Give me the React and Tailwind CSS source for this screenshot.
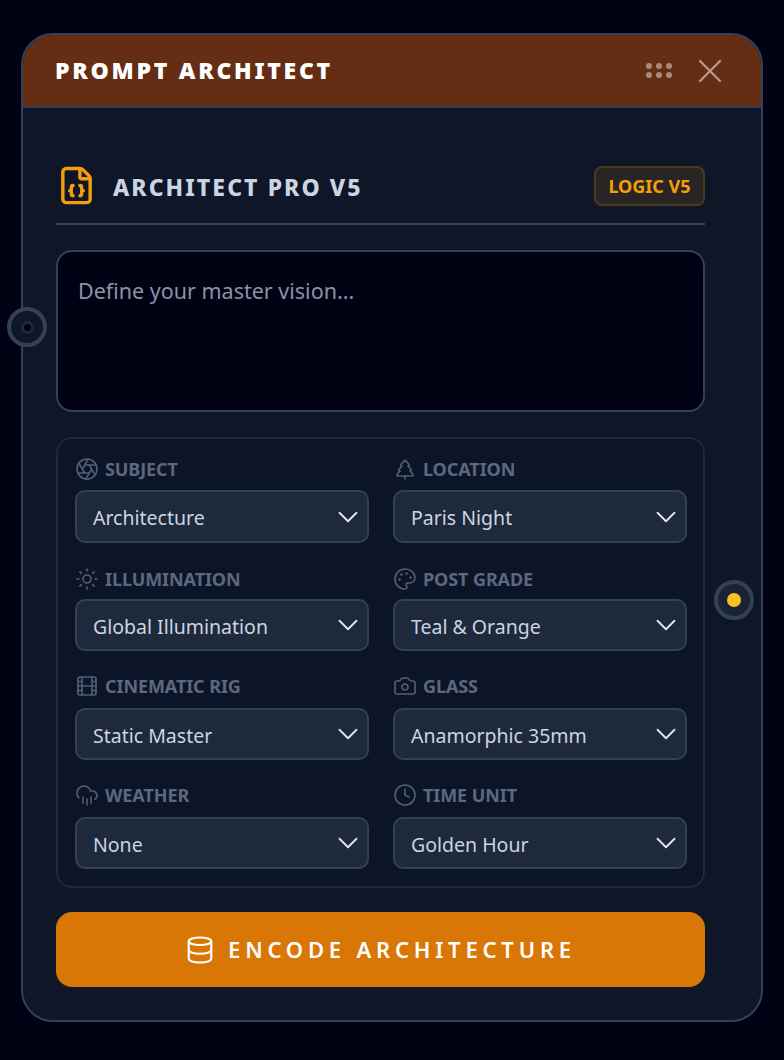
import {
  Aperture,
  Camera,
  ChevronDown,
  Clock,
  CloudRain,
  Database,
  FileJson,
  Film,
  Palette,
  Sun,
  TreePine,
  X,
} from 'lucide-react';

const fields = [
  [
    { label: 'SUBJECT', value: 'Architecture', icon: Aperture },
    { label: 'LOCATION', value: 'Paris Night', icon: TreePine },
  ],
  [
    { label: 'ILLUMINATION', value: 'Global Illumination', icon: Sun },
    { label: 'POST GRADE', value: 'Teal & Orange', icon: Palette },
  ],
  [
    { label: 'CINEMATIC RIG', value: 'Static Master', icon: Film },
    { label: 'GLASS', value: 'Anamorphic 35mm', icon: Camera },
  ],
  [
    { label: 'WEATHER', value: 'None', icon: CloudRain },
    { label: 'TIME UNIT', value: 'Golden Hour', icon: Clock },
  ],
];

const rowGaps = ['', 'mt-[24px]', 'mt-[23px]', 'mt-[23px]'];
const labelGaps = ['mb-[9px]', 'mb-[8px]', 'mb-[10px]', 'mb-[10px]'];

const Field = ({ label, value, icon: Icon, tall, labelGap }) => (
  <div className="flex flex-col">
    <div className={`flex h-[24px] items-center gap-[6px] ${labelGap}`}>
      <Icon size={24} strokeWidth={1.6} className="text-[#515f75]" />
      <span className="text-[18px] font-bold leading-none tracking-[-0.005em] text-[#5b6880]">{label}</span>
    </div>
    <div className="relative">
      <div
        className={`flex items-center rounded-[10px] border-2 border-[#334155] bg-[#1e293b] pl-[16px] text-[19.5px] text-[#cbd5e1] ${
          tall ? 'h-[53px] pt-[2px]' : 'h-[52px] pt-[4px]'
        }`}
      >
        {value}
      </div>
      <ChevronDown size={34} strokeWidth={1.3} className="absolute right-[4px] top-1/2 -translate-y-1/2 text-[#e2e8f0]" />
    </div>
  </div>
);

export default function App() {
  return (
    <div className="relative h-[1060px] w-[784px] overflow-hidden bg-[#000213] pt-[33px] pl-[21px] font-['Noto_Sans','Open_Sans',sans-serif]">
      <div className="relative h-[989px] w-[742px] rounded-[32px] border-2 border-[#334155] bg-[#0e1628]">
        <div className="flex h-[73px] items-center justify-between rounded-t-[30px] border-b-2 border-[#334155] bg-[#652e14] pl-[32px] pr-[31px]">
          <h1 className="text-[23px] font-black leading-none tracking-[0.118em] text-white">PROMPT ARCHITECT</h1>
          <div className="flex items-center gap-[18px]">
            <div className="grid grid-cols-3 gap-x-[4px] gap-y-[3.5px]">
              {[0, 1, 2, 3, 4, 5].map((i) => (
                <span key={i} className="h-[6px] w-[6px] rounded-full bg-[#a98a7d]" />
              ))}
            </div>
            <X size={40} strokeWidth={1.4} className="text-[#b9988a]" />
          </div>
        </div>

        <div className="w-[683px] pl-[33px]">
          <div className="mt-[57px] flex h-[60px] w-[649px] items-start justify-between border-b-2 border-[#334155]">
            <div className="flex items-center gap-[16px]">
              <FileJson size={41} strokeWidth={2} className="text-[#f59e0b]" />
              <h2 className="mt-[3px] text-[23px] font-extrabold leading-none tracking-[0.09em] text-[#cbd5e1]">ARCHITECT PRO V5</h2>
            </div>
            <span className="mt-[1px] flex h-[40px] w-[111px] items-center justify-center rounded-[8px] border-2 border-[#4c3a1f] bg-[#292524] text-[18px] font-bold text-[#f59e0b]">
              LOGIC V5
            </span>
          </div>

          <div className="mt-[25px] h-[162px] w-[649px] rounded-[16px] border-2 border-[#334155] bg-[#000213] px-[20px] pt-[25px] text-[21.5px] leading-[28px] text-[#8b93a5]">
            Define your master vision...
          </div>

          <div className="mt-[25px] flex h-[451px] w-[649px] flex-col rounded-[16px] border-2 border-[#1e293b] bg-[#0c1527] pl-[17px] pr-[16px] pt-[18px]">
            {fields.map((row, i) => (
              <div key={row[0].label} className={`grid grid-cols-2 gap-x-[24px] ${rowGaps[i]}`}>
                {row.map((field) => (
                  <Field key={field.label} {...field} tall={i === 0} labelGap={labelGaps[i]} />
                ))}
              </div>
            ))}
          </div>

          <div className="mt-[24px] flex h-[75px] w-[649px] items-center justify-center gap-[13px] rounded-[16px] bg-[#d97706] text-white">
            <Database size={30} strokeWidth={1.7} />
            <span className="text-[22px] font-semibold tracking-[0.218em]">ENCODE ARCHITECTURE</span>
          </div>
        </div>
      </div>

      <div className="absolute left-[7px] top-[307px] flex h-[40px] w-[40px] items-center justify-center rounded-full border-4 border-[#334155] bg-[#0e1628]">
        <span className="h-[13px] w-[13px] rounded-full border-[3px] border-[#1e293b] bg-[#000213]" />
      </div>
      <div className="absolute left-[714px] top-[580px] flex h-[40px] w-[40px] items-center justify-center rounded-full border-4 border-[#334155] bg-[#1a2336]">
        <span className="h-[14px] w-[14px] rounded-full bg-[#fbbf24]" />
      </div>
    </div>
  );
}
